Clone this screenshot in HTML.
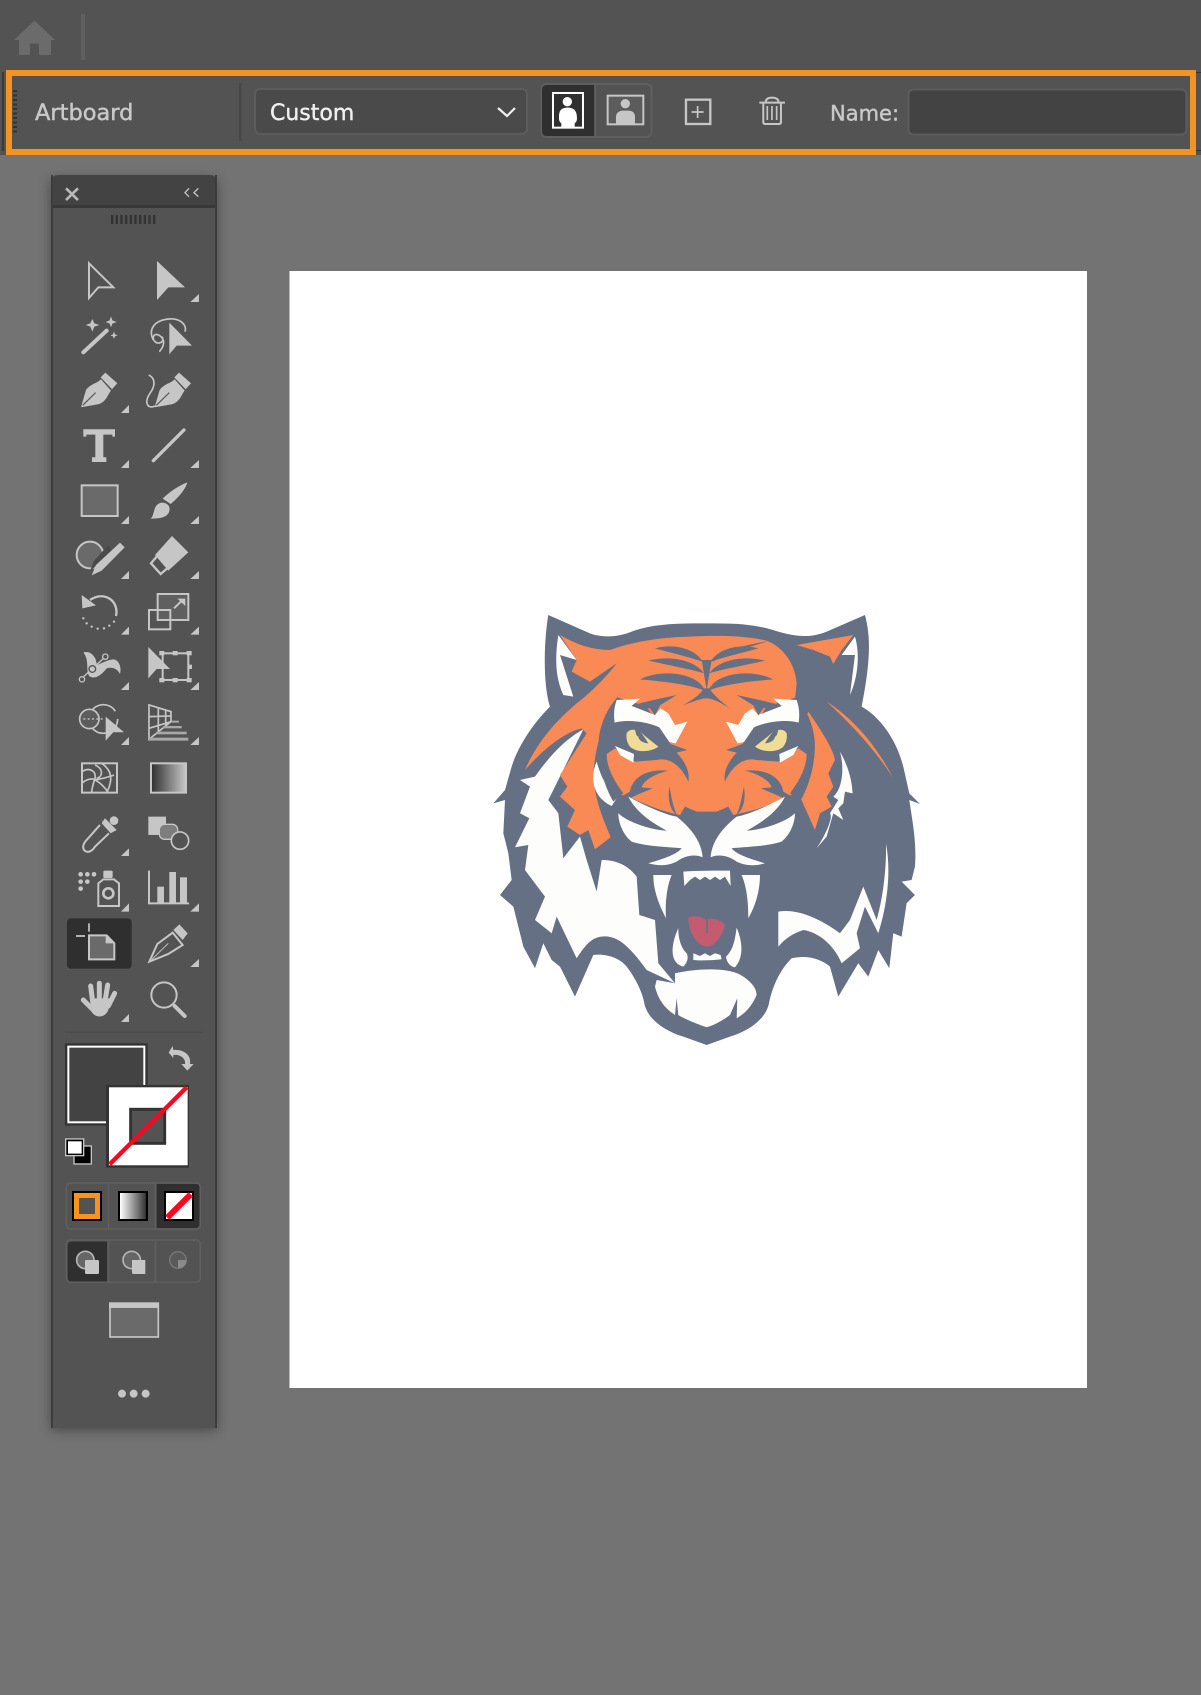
<!DOCTYPE html>
<html>
<head>
<meta charset="utf-8">
<style>
html,body{margin:0;padding:0;width:1201px;height:1695px;overflow:hidden;background:#737373}
svg{position:absolute;left:0;top:0;display:block}
text{font-family:"DejaVu Sans","Liberation Sans",sans-serif}
</style>
</head>
<body>
<svg width="1201" height="1695" viewBox="0 0 1201 1695" xmlns="http://www.w3.org/2000/svg">
<defs>
<filter id="sh" x="-20%" y="-5%" width="140%" height="110%"><feGaussianBlur stdDeviation="6"/></filter>
<filter id="soft" x="-5%" y="-5%" width="110%" height="110%"><feGaussianBlur stdDeviation=".6"/></filter>
<linearGradient id="g1" x1="0" x2="1" y1="0" y2="0"><stop offset="0" stop-color="#2e2e2e"/><stop offset="1" stop-color="#c8c8c8"/></linearGradient>
<linearGradient id="g2" x1="0" x2="1" y1="0" y2="0"><stop offset="0" stop-color="#fff"/><stop offset="1" stop-color="#333"/></linearGradient>
</defs>

<!-- backgrounds -->
<rect width="1201" height="1695" fill="#737373"/>
<rect width="1201" height="155" fill="#535353"/>
<rect x="290" y="271" width="797" height="1117" fill="#fff"/>
<rect x="289" y="271" width="1" height="1117" fill="#bbb"/>

<!-- app bar -->
<path d="M34.500 20.500 L14 40 H19 V55 H30 V43.500 H39 V55 H51 V40 H55Z" fill="#6b6b6b"/>
<rect x="81" y="14" width="4" height="46" fill="#5f5f5f"/>

<!-- control bar -->
<rect x="2" y="72" width="2" height="79" fill="#3a3a3a"/>
<rect x="1196" y="72" width="5" height="1" fill="#333"/>
<rect x="1196" y="150" width="5" height="1" fill="#333"/>
<rect x="9" y="73" width="1184" height="79" fill="#535353" stroke="#f39322" stroke-width="6"/>
<path d="M15 90 V134" stroke="#333" stroke-width="4" stroke-dasharray="2 2.500" fill="none"/>
<text x="35" y="120" font-size="22.500" fill="#c9c9c9" stroke="#c9c9c9" stroke-width=".45">Artboard</text>
<rect x="239" y="83" width="2.500" height="58" fill="#474747"/>
<rect x="255" y="89" width="272" height="45" rx="5" fill="#4a4a4a" stroke="#5c5c5c" stroke-width="2"/>
<text x="270" y="120" font-size="22" fill="#f0f0f0" stroke="#f0f0f0" stroke-width=".4">Custom</text>
<path d="M498 108 L507 116 L515 108" fill="none" stroke="#eee" stroke-width="2.200"/>
<rect x="541.500" y="84" width="110" height="53" rx="5" fill="#535353" stroke="#5f5f5f" stroke-width="2"/>
<path d="M547 85 H594 V136 H547 Q542 136 542 131 V90 Q542 85 547 85Z" fill="#2f2f2f"/>
<rect x="594.500" y="85" width="1.500" height="51" fill="#5f5f5f"/>
<g transform="translate(400,60) scale(.3333)">
  <rect x="459" y="99" width="90" height="104" fill="none" stroke="#fff" stroke-width="6"/>
  <circle cx="502" cy="125" r="14" fill="#fff"/>
  <path d="M498 143 C480 146 477 155 477 175 C477 185 482 188 484 190 V202 H524 V190 C527 187 531 185 531 175 C531 155 525 146 508 143Z" fill="#fff"/>
  <rect x="623" y="107" width="107" height="86" fill="#5c5c5c" stroke="#c6c6c6" stroke-width="6"/>
  <circle cx="676" cy="131" r="14" fill="#c6c6c6"/>
  <path d="M648 191 V170 C648 158 660 152 668 152 H686 C696 152 705 158 705 170 V191Z" fill="#c6c6c6"/>
  <rect x="858" y="119" width="73" height="73" fill="none" stroke="#c6c6c6" stroke-width="7"/>
  <path d="M893 138 V174 M875 156 H911" stroke="#c6c6c6" stroke-width="5"/>
  <path d="M1078 128 H1155" stroke="#c6c6c6" stroke-width="6"/>
  <path d="M1097 128 C1097 118 1103 113 1116 113 C1130 113 1136 118 1136 128" stroke="#c6c6c6" stroke-width="6" fill="none"/>
  <path d="M1090 130 V186 Q1090 192 1096 192 H1137 Q1143 192 1143 186 V130" stroke="#c6c6c6" stroke-width="6" fill="none"/>
  <path d="M1102 138 V180 M1116 138 V180 M1130 138 V180" stroke="#c6c6c6" stroke-width="5"/>
</g>
<text x="830" y="120.500" font-size="21" fill="#c9c9c9" stroke="#c9c9c9" stroke-width=".4">Name:</text>
<rect x="908.500" y="89.500" width="278" height="45" rx="5" fill="#434343" stroke="#5c5c5c" stroke-width="2"/>

<!-- tools panel -->
<rect x="51" y="180" width="166" height="1250" fill="#000" opacity=".38" filter="url(#sh)"/>
<path d="M59 175 H209 Q217 175 217 183 V1428 H51 V183 Q51 175 59 175Z" fill="#535353"/>
<path d="M59 175 H209 Q217 175 217 183 V205 H51 V183 Q51 175 59 175Z" fill="#434343"/>
<rect x="51" y="205" width="166" height="3" fill="#383838"/>
<rect x="51" y="175" width="2" height="1253" fill="#3c3c3c"/>
<rect x="215" y="175" width="2" height="1253" fill="#3c3c3c"/>

<!-- toolbox crop 2 coordinates -->
<g transform="translate(40,170) scale(.3333)" fill="#c6c6c6" stroke="none">
  <path d="M78 55 L114 90 M114 55 L78 90" stroke="#b8b8b8" stroke-width="8" fill="none"/>
  <path d="M447 55 L435 68 L447 80 M475 55 L462 68 L475 80" stroke="#c6c6c6" stroke-width="4" fill="none"/>
  <path d="M213 148.500 H346" stroke="#333" stroke-width="27" stroke-dasharray="7 7" fill="none"/>
  <path d="M147 280 L220 352 L175 352 L147 384Z" fill="none" stroke="#c6c6c6" stroke-width="6"/>
  <path d="M351 273 L435 352 L385 352 L351 390Z"/>
  <path d="M477 372 V396 H451Z"/>
  <path d="M157 447 L163 460 L178 465 L163 470 L157 485 L151 470 L137 465 L151 460Z"/>
  <path d="M213 439 L217 451 L230 456 L217 461 L213 472 L209 461 L197 456 L209 451Z"/>
  <path d="M222 484 L225 493 L233 496 L225 499 L222 507 L219 499 L211 496 L219 493Z"/>
  <path d="M130 547 L200 482" stroke="#c6c6c6" stroke-width="12" stroke-linecap="round" fill="none"/>
  <path d="M358 545 C372 530 378 510 358 496 C340 487 335 505 345 515 C355 525 376 516 366 500 M340 510 C325 480 340 452 385 447 C420 443 442 465 435 485" fill="none" stroke="#c6c6c6" stroke-width="5"/>
  <path d="M388 458 L456 527 L410 527 L388 553Z"/>
  <g>
    <path d="M124 708 L138 660 C150 642 172 640 183 628 L213 662 C202 675 200 695 175 703 L124 712Z"/>
    <path d="M196 608 L232 640 L216 658 L182 622Z"/>
    <path d="M128 706 L167 668" stroke="#535353" stroke-width="3.500" fill="none"/>
  </g>
  <g transform="translate(221,0)">
    <path d="M124 708 L138 660 C150 642 172 640 183 628 L213 662 C202 675 200 695 175 703 L124 712Z"/>
    <path d="M196 608 L232 640 L216 658 L182 622Z"/>
    <path d="M128 706 L167 668" stroke="#535353" stroke-width="3.500" fill="none"/>
  </g>
  <path d="M326 615 C348 625 345 650 330 670 C310 700 325 718 345 708" fill="none" stroke="#c6c6c6" stroke-width="5"/>
  <path d="M267 705 V729 H243Z"/>
  <path d="M130 778 H225 V800 H217 V794 H190 V862 H199 V876 H156 V862 H166 V794 H139 V800 H130Z"/>
  <path d="M340 872 L432 780" stroke="#c6c6c6" stroke-width="10" stroke-linecap="round" fill="none"/>
  <path d="M267 870 V894 H243Z M477 870 V894 H451Z"/>
</g>

<!-- crop 3 coordinates -->
<g transform="translate(40,500) scale(.3333)" fill="#c6c6c6">
  <rect x="125" y="-44" width="108" height="92" fill="#6a6a6a" stroke="#c6c6c6" stroke-width="6"/>
  <path d="M442 -53 C436 -30 412 -5 392 12 L368 -4 C388 -25 420 -45 442 -53Z"/>
  <path d="M332 56 C345 45 338 12 365 8 C390 8 395 30 382 44 C372 55 350 56 332 56Z"/>
  <path d="M267 48 V72 H243Z M477 48 V72 H451Z"/>
  <circle cx="150" cy="165" r="40" fill="#6a6a6a" stroke="#c6c6c6" stroke-width="6"/>
  <path d="M150 215 L200 165 L215 150 L205 135 L160 185Z" fill="#4a4a4a"/>
  <path d="M240 128 L254 142 L185 212 L155 226 L168 195Z"/>
  <path d="M396 108 L445 157 L385 212 L345 165Z"/>
  <path d="M350 170 L333 190 L362 222 L385 202" fill="none" stroke="#c6c6c6" stroke-width="7"/>
  <path d="M267 213 V237 H243Z M477 213 V237 H451Z"/>
  <path d="M228 348 C238 305 195 270 150 300" fill="none" stroke="#c6c6c6" stroke-width="7"/>
  <path d="M125 285 L127 325 L168 316Z"/>
  <g><circle cx="130" cy="355" r="3.500"/><circle cx="140" cy="370" r="3.500"/><circle cx="155" cy="380" r="3.500"/><circle cx="173" cy="386" r="3.500"/><circle cx="192" cy="385" r="3.500"/><circle cx="208" cy="377" r="3.500"/><circle cx="222" cy="365" r="3.500"/></g>
  <rect x="353" y="282" width="92" height="78" fill="#5f5f5f" stroke="#c6c6c6" stroke-width="6"/>
  <rect x="327" y="330" width="64" height="58" fill="none" stroke="#c6c6c6" stroke-width="6"/>
  <path d="M402 325 L428 300" stroke="#c6c6c6" stroke-width="6" fill="none"/>
  <path d="M412 296 H436 V318Z"/>
  <path d="M267 380 V404 H243Z M477 380 V404 H451Z"/>
  <path d="M130 458 C150 450 170 470 170 495 C185 490 200 480 220 478 C235 478 246 500 240 522 C232 505 215 500 200 505 C185 525 165 538 150 530 C135 520 150 480 130 458Z"/>
  <path d="M131 530 L190 476" stroke="#c6c6c6" stroke-width="4" fill="none"/>
  <circle cx="126" cy="538" r="8" fill="#535353" stroke="#c6c6c6" stroke-width="4"/>
  <circle cx="196" cy="470" r="8" fill="#535353" stroke="#c6c6c6" stroke-width="4"/>
  <circle cx="157" cy="507" r="10" fill="none" stroke="#535353" stroke-width="4"/>
  <path d="M267 546 V570 H243Z M477 546 V570 H451Z"/>
  <path d="M325 441 L390 507 L350 507 L325 535Z"/>
  <rect x="368" y="460" width="77" height="80" fill="none" stroke="#c6c6c6" stroke-width="6"/>
  <rect x="358" y="453" width="15" height="13"/><rect x="398" y="453" width="15" height="13"/><rect x="440" y="453" width="15" height="13"/><rect x="445" y="494" width="11" height="13"/><rect x="358" y="534" width="15" height="13"/><rect x="398" y="534" width="15" height="13"/><rect x="440" y="534" width="15" height="13"/>
  <circle cx="190" cy="657" r="43" fill="none" stroke="#c6c6c6" stroke-width="5" stroke-dasharray="105 35"/>
  <circle cx="148" cy="657" r="29" fill="#5c5c5c" stroke="#c6c6c6" stroke-width="5"/>
  <path d="M130 657 H190" stroke="#c6c6c6" stroke-width="4" stroke-dasharray="6 7"/>
  <path d="M197 650 L252 697 L220 697 L197 722Z"/>
  <path d="M267 711 V735 H243Z"/>
  <path d="M327 615 L393 635 V665 L327 718Z M327 650 L393 648 M327 685 L393 665 M355 622 V698 M377 630 V680" fill="none" stroke="#c6c6c6" stroke-width="5"/>
  <rect x="395" y="662" width="22" height="6" fill="#a8a8a8"/><rect x="370" y="678" width="55" height="7" fill="#a8a8a8"/><rect x="350" y="695" width="90" height="8" fill="#a8a8a8"/><rect x="327" y="713" width="118" height="9" fill="#a8a8a8"/>
  <path d="M477 711 V735 H451Z"/>
  <rect x="126" y="790" width="105" height="88" fill="#535353" stroke="#c6c6c6" stroke-width="6"/>
  <path d="M126 815 C150 800 170 815 165 835 C160 850 155 865 155 878 M126 850 C140 835 160 835 165 840 C185 850 200 870 205 878 M165 795 C190 805 190 830 170 835 M185 790 C215 810 220 840 200 878 M165 840 C190 835 210 830 222 825" fill="none" stroke="#c6c6c6" stroke-width="5"/>
  <rect x="333" y="790" width="105" height="88" fill="url(#g1)" stroke="#c6c6c6" stroke-width="6"/>
  <circle cx="222" cy="962" r="13"/>
  <path d="M190 965 L222 996 L205 985 L182 958Z"/>
  <path d="M180 975 L140 1020 C130 1030 125 1045 135 1053 C145 1060 158 1052 165 1040 L207 1000" fill="none" stroke="#c6c6c6" stroke-width="6"/>
  <path d="M195 955 L230 990 L212 1000 L185 970Z"/>
  <rect x="325" y="950" width="53" height="55"/>
  <rect x="358" y="973" width="55" height="45" rx="16" fill="#7d7d7d" stroke="#c6c6c6" stroke-width="4"/>
  <circle cx="420" cy="1022" r="26" fill="#535353" stroke="#c6c6c6" stroke-width="5"/>
</g>

<!-- crop 4 coordinates -->
<g transform="translate(40,830) scale(.3333)" fill="#c6c6c6">
  <path d="M267 55 V78 H243Z"/>
  <g><circle cx="122" cy="133" r="7"/><circle cx="142" cy="133" r="7"/><circle cx="162" cy="133" r="7"/><circle cx="122" cy="155" r="7"/><circle cx="142" cy="155" r="7"/><circle cx="122" cy="176" r="7"/></g>
  <rect x="190" y="122" width="28" height="22" rx="4"/>
  <path d="M175 228 V160 L190 148 H222 L237 160 V228Z" fill="none" stroke="#c6c6c6" stroke-width="6"/>
  <circle cx="205" cy="190" r="15" fill="none" stroke="#c6c6c6" stroke-width="8"/>
  <path d="M267 220 V245 H243Z"/>
  <path d="M327 122 V220 H447" fill="none" stroke="#c6c6c6" stroke-width="6"/>
  <rect x="352" y="170" width="20" height="48"/><rect x="388" y="126" width="20" height="92"/><rect x="420" y="142" width="21" height="76"/>
  <path d="M477 220 V245 H451Z"/>
  <rect x="81" y="265" width="194" height="151" rx="11" fill="#2f2f2f"/>
  <path d="M147 280 V305 M108 318 H135" stroke="#c6c6c6" stroke-width="5" fill="none"/>
  <path d="M147 316 H200 L223 340 V388 H147Z" fill="#6a6a6a" stroke="#c6c6c6" stroke-width="6"/>
  <path d="M197 316 V340 H223Z" fill="#c6c6c6"/>
  <path d="M328 395 L352 342 L398 308 L428 345 L385 372Z" fill="none" stroke="#c6c6c6" stroke-width="6"/>
  <path d="M336 388 L385 340" stroke="#c6c6c6" stroke-width="3" fill="none"/>
  <path d="M418 283 L443 310 L428 330 L400 300Z"/>
  <path d="M477 387 V411 H451Z"/>
  <path d="M178 460 V515 M152 468 L158 515 M203 465 L195 515 M224 490 L205 528 M130 510 L165 545" stroke="#c6c6c6" stroke-width="15" stroke-linecap="round" fill="none"/>
  <path d="M150 505 H212 L205 540 C195 565 165 565 155 545Z"/>
  <path d="M267 552 V576 H243Z"/>
  <circle cx="372" cy="495" r="38" fill="none" stroke="#c6c6c6" stroke-width="6"/>
  <path d="M404 528 L434 558" stroke="#c6c6c6" stroke-width="12" stroke-linecap="round"/>
  <rect x="75" y="605" width="413" height="3" fill="#4a4a4a"/>
  <path d="M398 648 L386 668 L400 684 V675 C420 672 438 685 435 702 L424 702 L442 722 L461 702 L450 702 C455 675 430 657 400 660Z"/>
  <rect x="75" y="640" width="248" height="247" fill="#333"/>
  <rect x="85" y="650" width="228" height="227" fill="#434343" stroke="#fff" stroke-width="6"/>
  <rect x="198" y="765" width="249" height="248" fill="#333"/>
  <rect x="207" y="772" width="236" height="234" fill="#fff"/>
  <rect x="272" y="838" width="102" height="102" fill="#535353" stroke="#333" stroke-width="9"/>
  <path d="M209 1003 L440 772" stroke="#f40a20" stroke-width="13" fill="none"/>
  <rect x="102" y="948" width="52" height="54" fill="#000" stroke="#c6c6c6" stroke-width="4"/>
  <rect x="77" y="927" width="54" height="50" fill="#000" stroke="#c6c6c6" stroke-width="4"/>
  <rect x="84" y="934" width="41" height="37" fill="#fff"/>
</g>

<!-- crop 5 coordinates -->
<g transform="translate(40,1170) scale(.3333)" fill="#c6c6c6">
  <path d="M350 41 H467 Q479 41 479 53 V163 Q479 175 467 175 H350Z" fill="#2f2f2f"/>
  <rect x="79" y="39" width="402" height="138" rx="13" fill="none" stroke="#5f5f5f" stroke-width="5"/>
  <rect x="203" y="40" width="5" height="136" fill="#5f5f5f"/><rect x="344" y="40" width="5" height="136" fill="#5f5f5f"/>
  <rect x="96" y="63" width="90" height="90" fill="#000"/>
  <rect x="102" y="69" width="78" height="78" fill="#f7931e"/>
  <rect x="117" y="84" width="48" height="48" fill="#535353"/>
  <rect x="234" y="63" width="90" height="90" fill="#000"/>
  <rect x="240" y="69" width="78" height="78" fill="url(#g2)"/>
  <rect x="372" y="63" width="90" height="90" fill="#000"/>
  <rect x="378" y="69" width="78" height="78" fill="#fff"/>
  <path d="M382 143 L452 73" stroke="#f40a20" stroke-width="18"/>
  <path d="M95 215 H201 V335 H95 Q83 335 83 323 V227 Q83 215 95 215Z" fill="#2f2f2f"/>
  <rect x="79" y="210" width="402" height="127" rx="13" fill="none" stroke="#5f5f5f" stroke-width="5"/>
  <rect x="203" y="211" width="5" height="125" fill="#5f5f5f"/><rect x="344" y="211" width="5" height="125" fill="#5f5f5f"/>
  <circle cx="136" cy="270" r="26" fill="#666" stroke="#b4b4b4" stroke-width="5"/>
  <rect x="135" y="270" width="42" height="42" rx="4"/>
  <circle cx="275" cy="270" r="26" fill="#666" stroke="#b4b4b4" stroke-width="5"/>
  <path d="M276 270 H316 V312 H280 Q276 312 276 308Z"/>
  <circle cx="414" cy="270" r="25" fill="#5a5a5a" stroke="#777" stroke-width="4"/>
  <path d="M414 270 H439 C439 285 428 295 414 295Z" fill="#8a8a8a"/>
  <rect x="210" y="400" width="145" height="101" fill="#6a6a6a" stroke="#c6c6c6" stroke-width="5"/>
  <rect x="207" y="397" width="150" height="17"/>
  <circle cx="246" cy="671" r="12"/><circle cx="281" cy="671" r="12"/><circle cx="317" cy="671" r="12"/>
</g>

<!-- tiger -->
<g transform="translate(480,600) scale(.3333)" filter="url(#soft)">
  <path fill="#667084" d="M205 45 L330 100 C370 115 420 110 455 95 C520 70 600 70 680 70 C760 70 820 70 895 95 C950 110 990 115 1040 95 L1155 45 C1170 100 1175 170 1145 320 C1200 350 1250 420 1270 500 L1288 580 L1320 612 L1288 600 C1300 680 1310 730 1305 800 L1295 840 L1265 845 L1305 885 L1280 910 L1265 1010 L1240 1000 L1228 1105 L1195 1050 L1165 1130 L1135 1090 L1075 1190 L1050 1100 C1020 1075 980 1065 935 1075 C905 1105 880 1150 868 1205 C860 1260 800 1295 750 1310 L680 1335 L610 1310 C560 1295 500 1260 492 1205 C485 1170 460 1125 440 1100 C420 1075 380 1060 340 1065 L285 1190 L240 1100 L215 1080 L190 1030 L165 1105 L130 1040 L100 920 L60 885 L95 840 L85 760 L70 700 L75 600 L40 610 L75 570 L95 500 C110 450 150 380 210 320 C190 260 190 130 205 45Z"/>
  <path fill="#fdfdfb" d="M235 105 L290 180 L240 165 L280 290 L250 285 C225 230 225 170 235 105Z"/>
  <path fill="#fdfdfb" d="M1125 110 L1085 165 L1125 165 L1110 285 C1135 230 1140 160 1125 110Z"/>
  <path fill="#f98a57" d="M950 135 L1120 105 L1085 150 L1060 192 L1050 170 L1000 150Z"/>
  <path fill="#f98a57" d="M1040 305 C1110 350 1180 420 1240 535 C1180 440 1100 360 1040 305Z"/>
  <!-- left white mane -->
  <path fill="#fdfdfb" d="M310 388 C250 420 200 480 165 530 L120 540 L150 560 L120 640 L148 655 L105 742 L145 735 L135 810 L195 890 L165 960 L215 1000 L230 950 L290 1075 C320 1030 340 1005 385 1010 C430 1015 470 1070 500 1110 L585 1150 L535 1090 L525 960 L478 945 L470 830 C440 790 400 780 365 780 L350 875 L320 780 L300 710 L250 775 L235 640 L205 600 L225 560Z"/>
  <!-- main orange -->
  <path fill="#f98a57" d="M240 105 C290 135 340 150 390 150 C460 125 540 112 630 110 C720 105 800 108 860 122 C905 140 945 185 950 250 L945 300 L410 300 L380 350 C360 400 340 470 340 540 C350 620 380 680 392 712 L345 748 L325 690 L300 705 L262 680 L285 630 L240 590 L262 560 L240 525 L320 400 L305 385 C240 400 170 470 135 510 C170 430 220 370 290 310 C330 280 380 230 410 190 L330 245 L275 215 L290 180Z"/>
  <!-- right strip -->
  <path fill="#f98a57" d="M985 335 C1030 400 1060 450 1065 480 L1045 520 L1060 560 L1040 590 L1055 620 L1020 640 L1005 690 L960 590 L960 400Z"/>
  <path fill="#fdfdfb" d="M1080 455 C1100 490 1115 530 1118 580 L1095 575 L1090 610 L1075 625 L1090 660 L1060 640 L1040 710 L1010 745 C1040 700 1060 650 1050 640 L1075 600 L1060 590 C1085 570 1095 510 1080 455Z"/>
  <!-- right lower white -->
  <path fill="#fdfdfb" d="M895 935 C950 925 1020 955 1080 1000 L1110 960 L1150 860 L1190 960 C1210 890 1220 800 1218 730 C1235 820 1220 920 1195 1000 L1155 920 L1130 1000 L1140 1045 L1085 1090 C1060 1030 1010 995 970 990 C940 1000 915 1015 895 1040Z"/>
  <!-- forehead stripes -->
  <g fill="#667084">
    <path d="M525 145 C580 130 645 145 668 185 C630 172 580 160 525 145Z"/>
    <path d="M505 182 C570 165 645 180 672 220 C630 207 570 197 505 182Z"/>
    <path d="M480 238 C540 208 625 218 660 250 L680 275 C640 255 560 245 480 238Z"/>
    <g transform="matrix(-1 0 0 1 1360 0)">
      <path d="M525 145 C580 130 645 145 668 185 C630 172 580 160 525 145Z"/>
      <path d="M505 182 C570 165 645 180 672 220 C630 207 570 197 505 182Z"/>
      <path d="M480 238 C540 208 625 218 660 250 L680 275 C640 255 560 245 480 238Z"/>
    </g>
    <path d="M695 180 C730 150 800 135 865 123 C800 145 740 160 700 185Z"/>
    <path d="M665 180 L695 180 L680 270Z"/>
  </g>
  <!-- face, zoom7 coordinates -->
  <g transform="translate(300,240)">
    <path fill="#f98a57" d="M70 40 L645 40 L645 60 L690 120 L690 330 L615 350 C560 385 500 395 460 405 L445 380 L410 395 L350 395 L315 380 L300 405 C250 395 200 375 145 350 L70 330Z"/>
    <path fill="#667084" d="M310 75 C335 60 355 50 372 25 L388 25 C405 50 425 65 450 85 C425 70 400 55 380 55 C360 55 340 65 310 75Z"/>
    <g>
      <path fill="#fdfdfb" d="M50 245 C30 290 35 350 95 378 L110 355 C75 320 60 280 50 245Z"/>
      <path fill="#667084" d="M112 52 C90 75 62 120 56 180 C52 240 68 310 100 365 C110 355 120 345 130 340 C100 300 80 260 80 222 L105 205 L165 245 L230 240 C270 230 305 260 325 305 C330 280 320 250 290 218 L322 210 L272 192 L240 140 L200 80 L112 52Z"/>
      <path fill="#fdfdfb" d="M110 60 L180 56 L155 78 L225 105 L242 85 L265 100 L285 135 L322 125 L287 190 L268 186 L238 142 C190 120 130 120 104 128 C100 100 103 80 110 60Z"/>
      <path fill="#667084" d="M290 45 L220 60 L155 76 L210 85 L225 106 L240 76Z"/>
      <path fill="#fdfdfb" d="M105 198 L162 222 L160 248 L120 225Z"/>
      <path fill="#f1dc96" d="M140 160 C150 142 175 148 195 168 L235 200 C215 216 170 220 150 200 C140 187 138 172 140 160Z"/>
      <path fill="#667084" d="M165 150 C180 150 190 165 205 190 C190 190 175 180 175 170 C168 168 168 158 165 150Z"/>
      <path fill="#667084" d="M90 440 C85 390 110 355 150 335 C155 300 190 265 265 272 C215 285 190 305 185 322 L218 325 L170 345 L140 360 L120 430Z"/>
      <path fill="#667084" d="M268 320 C262 360 270 390 292 407 C278 380 275 350 268 320Z"/>
    </g>
    <g transform="matrix(-1 0 0 1 760 0)">
      <path fill="#667084" d="M112 52 C90 75 62 120 56 180 C52 240 68 310 100 365 C110 355 120 345 130 340 C100 300 80 260 80 222 L105 205 L165 245 L230 240 C270 230 305 260 325 305 C330 280 320 250 290 218 L322 210 L272 192 L240 140 L200 80 L112 52Z"/>
      <path fill="#fdfdfb" d="M110 60 L180 56 L155 78 L225 105 L242 85 L265 100 L285 135 L322 125 L287 190 L268 186 L238 142 C190 120 130 120 104 128 C100 100 103 80 110 60Z"/>
      <path fill="#667084" d="M290 45 L220 60 L155 76 L210 85 L225 106 L240 76Z"/>
      <path fill="#fdfdfb" d="M105 198 L162 222 L160 248 L120 225Z"/>
      <path fill="#f1dc96" d="M140 160 C150 142 175 148 195 168 L235 200 C215 216 170 220 150 200 C140 187 138 172 140 160Z"/>
      <path fill="#667084" d="M165 150 C180 150 190 165 205 190 C190 190 175 180 175 170 C168 168 168 158 165 150Z"/>
      <path fill="#667084" d="M90 440 C85 390 110 355 150 335 C155 300 190 265 265 272 C215 285 190 305 185 322 L218 325 L170 345 L140 360 L120 430Z"/>
      <path fill="#667084" d="M268 320 C262 360 270 390 292 407 C278 380 275 350 268 320Z"/>
    </g>
  </g>
  <!-- muzzle -->
  <path fill="#fdfdfb" d="M445 590 C510 625 560 645 590 650 C640 690 665 730 668 772 C640 760 610 770 590 785 C560 800 530 797 505 790 C540 780 590 765 605 745 C560 740 500 740 455 725 C430 705 415 670 415 640 C440 665 510 690 560 692 C520 670 470 640 445 590Z"/>
  <path fill="#fdfdfb" transform="matrix(-1 0 0 1 1360 0)" d="M445 590 C510 625 560 645 590 650 C640 690 665 730 668 772 C640 760 610 770 590 785 C560 800 530 797 505 790 C540 780 590 765 605 745 C560 740 500 740 455 725 C430 705 415 670 415 640 C440 665 510 690 560 692 C520 670 470 640 445 590Z"/>
  <!-- mouth, zoom8 coordinates -->
  <g transform="translate(420,690)" fill="#fdfdfb">
    <path d="M190 125 C230 122 290 122 330 122 L332 168 L315 140 L300 150 L285 140 L270 150 L255 140 L240 150 L225 140 L210 150 L193 168Z"/>
    <path d="M100 135 L155 135 C140 170 135 220 138 265 C115 220 100 180 100 135Z"/>
    <path d="M365 135 L420 135 C420 185 405 230 385 265 C385 215 380 170 365 135Z"/>
    <path fill="#c45c70" d="M205 262 C225 255 250 262 258 270 C275 262 300 268 315 285 C305 320 285 350 260 350 C225 345 205 300 205 262Z"/>
    <path d="M261 270 V310" stroke="#667084" stroke-width="5" fill="none"/>
    <path d="M175 295 C150 350 150 400 190 410 C205 395 205 380 200 370 C180 350 175 320 175 295Z"/>
    <path d="M350 293 C345 330 340 360 318 380 C320 400 335 412 345 412 C370 385 370 340 350 293Z"/>
    <path d="M220 370 L240 378 L255 370 L270 378 L285 370 L302 375 L305 388 C270 392 240 392 220 390Z"/>
    <path d="M165 430 C230 415 330 410 370 440 C400 460 410 480 410 495 C395 530 375 550 350 565 L352 505 L330 555 C310 570 285 585 260 592 C225 580 190 565 175 555 L170 505 L165 555 C135 535 115 510 105 470 L110 450 L165 460Z"/>
  </g>
</g>
</svg>
</body>
</html>
